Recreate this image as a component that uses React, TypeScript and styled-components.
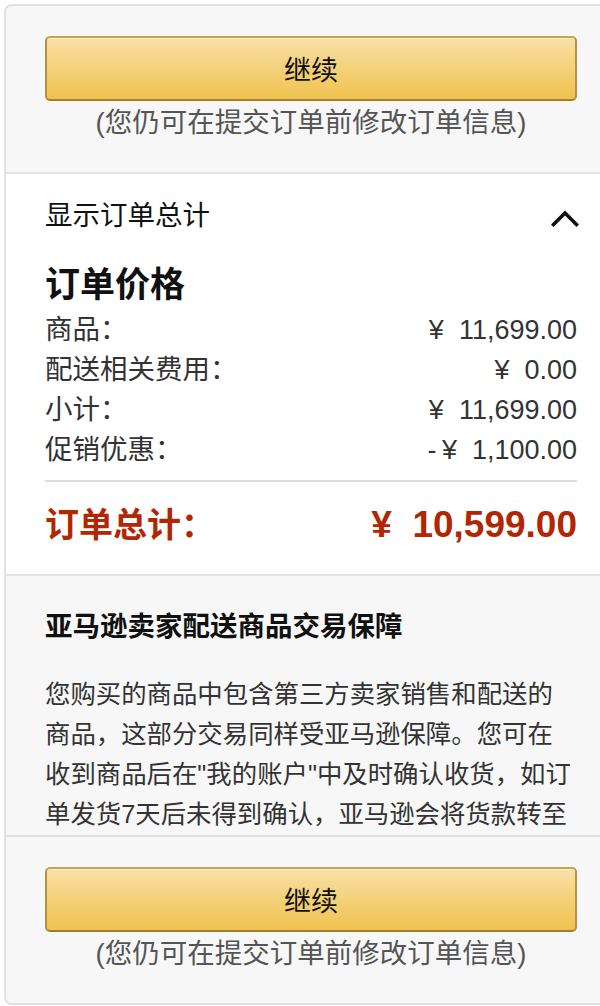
import styled, { createGlobalStyle } from 'styled-components';

const GlobalStyle = createGlobalStyle`
  html, body {
    margin: 0;
    padding: 0;
    background: #ffffff;
    overflow: hidden;
  }
  body {
    font-family: "Liberation Sans", "Noto Sans CJK SC", sans-serif;
    color: #111111;
  }
  * {
    box-sizing: border-box;
  }
`

const rows = [
    { label: '商品：', amount: '¥  11,699.00' },
    { label: '配送相关费用：', amount: '¥  0.00' },
    { label: '小计：', amount: '¥  11,699.00' },
    { label: '促销优惠：', amount: '-\u2009¥  1,100.00' },
];

const ChevronUp = () => (
    <svg width="28" height="18" viewBox="0 0 28 18" fill="none">
        <polyline points="2.5,15.5 14,4 25.5,15.5" stroke="#111" strokeWidth="3.6" strokeLinecap="square" />
    </svg>
);

const ContinueBlock = () => (
    <>
        <ContinueButton type="button">继续</ContinueButton>
        <Hint>(您仍可在提交订单前修改订单信息)</Hint>
    </>
);

const App = () => {
    return (
        <>
            <GlobalStyle />
            <Card>
                <Scroller>
                    <TopSection>
                        <ContinueBlock />
                    </TopSection>
                    <SummarySection>
                        <ToggleRow>
                            <ToggleText>显示订单总计</ToggleText>
                            <ChevronUp />
                        </ToggleRow>
                        <PriceTitle>订单价格</PriceTitle>
                        {rows.map(row => (
                            <PriceRow key={row.label}>
                                <Label>{row.label}</Label>
                                <Amount>{row.amount}</Amount>
                            </PriceRow>
                        ))}
                        <Divider />
                        <TotalRow>
                            <TotalLabel>订单总计：</TotalLabel>
                            <TotalAmount>{'¥  10,599.00'}</TotalAmount>
                        </TotalRow>
                    </SummarySection>
                    <GuaranteeSection>
                        <GuaranteeTitle>亚马逊卖家配送商品交易保障</GuaranteeTitle>
                        <GuaranteeText>
                            您购买的商品中包含第三方卖家销售和配送的商品，这部分交易同样受亚马逊保障。您可在收到商品后在"我的账户"中及时确认收货，如订单发货7天后未得到确认，亚马逊会将货款转至卖家账户。如有问题，请联系"亚马逊客服"。
                        </GuaranteeText>
                    </GuaranteeSection>
                </Scroller>
                <Footer>
                    <ContinueBlock />
                </Footer>
            </Card>
        </>
    );
}

export default App;

const Card = styled.div`
    margin: 4px 0 0 4px;
    height: 1001px;
    display: flex;
    flex-direction: column;
    border: 2px solid #e1e1e1;
    border-right: none;
    border-radius: 8px 0 0 8px;
    background-color: #f7f7f7;
    overflow: hidden;
`

const Scroller = styled.div`
    flex: 1;
    min-height: 0;
    overflow: hidden;
`

const TopSection = styled.div`
    padding: 30px 23px 29px 39px;
    border-bottom: 2px solid #e3e3e3;
`

const ContinueButton = styled.button`
    display: block;
    width: 100%;
    height: 65px;
    border: 2px solid #b8923a;
    border-color: #c9a349 #b8923a #a37e2c;
    border-radius: 5px;
    background: linear-gradient(to bottom, #f8e0a6, #f0c24e);
    box-shadow: inset 0 1px 0 rgba(255, 255, 255, 0.5);
    font-family: "Liberation Sans", "Noto Sans CJK SC", sans-serif;
    font-size: 27px;
    color: #111111;
    padding: 0;
`

const Hint = styled.div`
    margin-top: 2px;
    text-align: center;
    font-size: 27.5px;
    line-height: 40px;
    color: #555555;
`

const SummarySection = styled.div`
    background-color: #ffffff;
    padding: 22px 23px 25px 39px;
    border-bottom: 2px solid #e3e3e3;
`

const ToggleRow = styled.div`
    display: flex;
    justify-content: space-between;
    align-items: center;
    height: 40px;
    svg {
        margin-right: -2px;
        margin-top: 4px;
    }
`

const ToggleText = styled.span`
    font-size: 27.5px;
    line-height: 40px;
    color: #111111;
`

const PriceTitle = styled.h2`
    margin: 27px 0 3px 0;
    font-size: 35px;
    line-height: 44px;
    font-weight: 700;
    color: #111111;
`

const PriceRow = styled.div`
    display: flex;
    justify-content: space-between;
    align-items: center;
    height: 40px;
`

const Label = styled.span`
    font-size: 27.5px;
    line-height: 40px;
    color: #333333;
`

const Amount = styled.span`
    font-size: 27px;
    line-height: 40px;
    color: #333333;
    white-space: pre;
`

const Divider = styled.div`
    margin-top: 10px;
    height: 2px;
    background-color: #dddddd;
`

const TotalRow = styled.div`
    display: flex;
    justify-content: space-between;
    align-items: center;
    margin-top: 19px;
    height: 48px;
    color: #b12704;
    font-weight: 700;
`

const TotalLabel = styled.span`
    font-size: 34px;
    line-height: 48px;
`

const TotalAmount = styled.span`
    font-size: 37px;
    line-height: 48px;
    white-space: pre;
`

const GuaranteeSection = styled.div`
    padding: 31px 23px 30px 39px;
`

const GuaranteeTitle = styled.h3`
    margin: 0;
    font-size: 27.5px;
    line-height: 40px;
    font-weight: 700;
    color: #111111;
`

const GuaranteeText = styled.p`
    margin: 27px 0 0 0;
    font-size: 25.4px;
    line-height: 40px;
    color: #333333;
    width: 529px;
`

const Footer = styled.div`
    flex-shrink: 0;
    padding: 30px 23px 29px 39px;
    border-top: 2px solid #e1e1e1;
    background-color: #f7f7f7;
`
